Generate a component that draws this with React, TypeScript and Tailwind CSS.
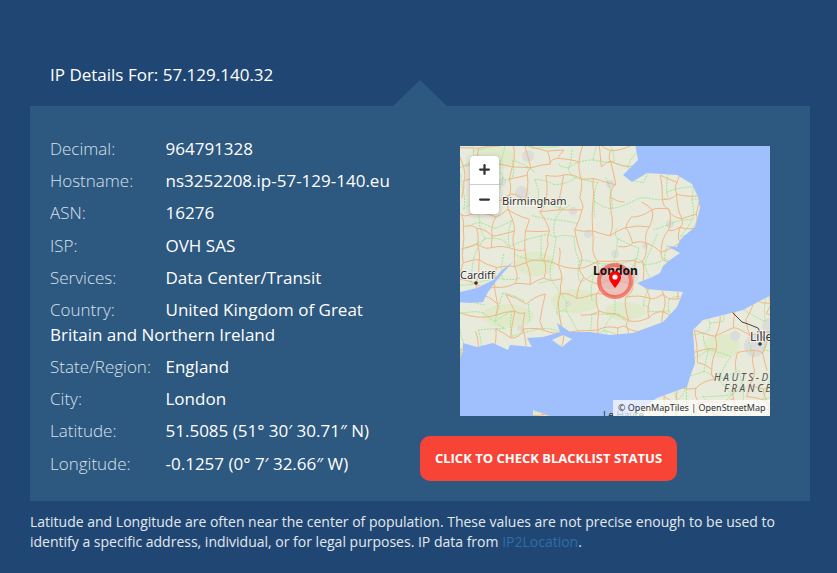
import { ReactNode } from 'react'
import { Minus, Plus } from 'lucide-react'

const britain =
  'M-5 -5 L175 -5 L176 3 L178 14 L168 24 L163 29 L172 36 L187 27 L217 29 L232 38 L238 51 L240 62 L235 81 L224 90 L220 94 L217 101 L207 100 L220 107 L210 114 L203 120 L200 127 L190 132 L177 137 L187 143 L197 144 L223 146 L217 161 L203 176 L173 187 L150 189 L130 186 L110 186 L97 177 L100 186 L83 191 L67 192 L72 201 L50 199 L48 204 L33 197 L17 201 L3 197 L3 205 L-2 217 L-5 217 L-5 156 L10 157 L23 156 L28 146 L37 134 L43 127 L53 116 L42 124 L33 134 L17 142 L0 146 L-5 146 Z'
const france =
  'M315 147 L283 164 L243 174 L233 184 L235 217 L230 231 L227 241 L197 252 L177 266 L152 275 L315 275 Z'
const wight = 'M92 194 L103 189 L112 193 L102 201 Z'
const cherbourg = 'M73 264 L90 270 L73 275 Z'

// seeded so the network comes out the same on every render
const makeLines = (seed: number, step: number, jitter: number, skip: number) => {
  let s = seed
  const rnd = () => {
    s = (s * 16807) % 2147483647
    return s / 2147483647
  }
  const cols = Math.ceil(320 / step) + 1
  const rows = Math.ceil(280 / step) + 1
  const pts: [number, number][][] = []
  for (let y = 0; y < rows; y++) {
    const row: [number, number][] = []
    for (let x = 0; x < cols; x++) {
      row.push([x * step + (rnd() - 0.5) * jitter, y * step + (rnd() - 0.5) * jitter])
    }
    pts.push(row)
  }
  const seg = (a: [number, number], b: [number, number]) => {
    const mx = (a[0] + b[0]) / 2 + (rnd() - 0.5) * step * 0.5
    const my = (a[1] + b[1]) / 2 + (rnd() - 0.5) * step * 0.5
    return `M${a[0].toFixed(1)} ${a[1].toFixed(1)}Q${mx.toFixed(1)} ${my.toFixed(1)} ${b[0].toFixed(1)} ${b[1].toFixed(1)}`
  }
  let d = ''
  for (let y = 0; y < rows; y++) {
    for (let x = 0; x < cols; x++) {
      if (x + 1 < cols && rnd() > skip) d += seg(pts[y][x], pts[y][x + 1])
      if (y + 1 < rows && rnd() > skip) d += seg(pts[y][x], pts[y + 1][x])
    }
  }
  return d
}

const roads = makeLines(4711, 17, 11, 0.26)
const greens = makeLines(90210, 19, 16, 0.4)

const urban: [number, number, number][] = [
  [30, 60, 7], [17, 32, 5], [68, 10, 6], [42, 36, 4], [62, 47, 7], [100, 55, 4], [150, 38, 4], [113, 65, 4],
  [128, 88, 4], [210, 78, 4], [225, 118, 4], [155, 108, 4], [185, 100, 3], [150, 130, 13], [170, 130, 9],
  [60, 182, 3], [108, 158, 3], [295, 200, 11], [275, 190, 5], [310, 180, 8], [285, 262, 4],
]

function MapPreview() {
  return (
    <div className="relative h-[270px] w-[310px] overflow-hidden bg-[#9fc0fc]">
      <svg width="310" height="270" viewBox="0 0 310 270" className="block font-['Noto_Sans',sans-serif]">
        <defs>
          <clipPath id="land">
            <path d={britain} />
            <path d={france} />
            <path d={wight} />
            <path d={cherbourg} />
          </clipPath>
        </defs>
        <path d={britain} fill="#e8eadc" />
        <path d={france} fill="#e8eadc" />
        <path d={wight} fill="#e8eadc" />
        <path d={cherbourg} fill="#e8eadc" />
        <g clipPath="url(#land)">
          <g fill="#e0eaca">
            <ellipse cx="35" cy="12" rx="20" ry="12" />
            <ellipse cx="75" cy="118" rx="20" ry="12" />
            <ellipse cx="48" cy="170" rx="26" ry="12" />
            <ellipse cx="115" cy="155" rx="24" ry="12" />
            <ellipse cx="165" cy="165" rx="20" ry="9" />
            <ellipse cx="262" cy="200" rx="18" ry="12" />
          </g>
          {urban.map(([cx, cy, r]) => (
            <circle key={`${cx}-${cy}`} cx={cx} cy={cy} r={r} fill="#dcdcda" />
          ))}
          <path d={greens} fill="none" stroke="#9fe694" strokeWidth="1" strokeDasharray="2 1" />
          <path d={roads} fill="none" stroke="#f0b684" strokeWidth="1" />
          <path d="M272 166 L282 176 L288 178 L298 182 L305 196" fill="none" stroke="#444" strokeWidth="1" />
        </g>
        <circle cx="30" cy="59" r="1.8" fill="#333" />
        <circle cx="16" cy="137" r="1.8" fill="#333" />
        <circle cx="300" cy="198" r="1.8" fill="#333" />
        <text x="42" y="59" fontSize="11" fill="#333" stroke="#ffffff" strokeOpacity="0.6" strokeWidth="2" paintOrder="stroke">Birmingham</text>
        <text x="0" y="133" fontSize="11" fill="#333" stroke="#ffffff" strokeOpacity="0.6" strokeWidth="2" paintOrder="stroke">Cardiff</text>
        <text x="290" y="195" fontSize="12" fill="#333" stroke="#ffffff" strokeOpacity="0.6" strokeWidth="2" paintOrder="stroke">Lille</text>
        <text x="254" y="235" fontSize="10" fontStyle="italic" letterSpacing="2.5" fill="#555">HAUTS-DE-</text>
        <text x="264" y="246" fontSize="10" fontStyle="italic" letterSpacing="2.5" fill="#555">FRANCE</text>
        <text x="143" y="273" fontSize="10" fill="#333">Le Havre</text>
        <circle cx="155" cy="135" r="16" fill="#ef9a9a" fillOpacity="0.5" stroke="#f44336" strokeOpacity="0.6" strokeWidth="4" />
        <text x="133" y="129" fontSize="12" fontWeight="700" fill="#111">London</text>
        <path d="M155 142 C151 137 149 134 149 131 A6 6 0 0 1 161 131 C161 134 159 137 155 142 Z" fill="#f00" />
        <circle cx="155" cy="131" r="2.6" fill="#fff" />
      </svg>
      <div className="absolute left-[10px] top-[10px] flex w-[29px] flex-col overflow-hidden rounded bg-white shadow-[0_1px_5px_rgba(0,0,0,0.25)]">
        <div className="flex h-[29px] items-center justify-center border-b border-[#cccccc] text-[#333333]">
          <Plus size={15} strokeWidth={3.6} />
        </div>
        <div className="flex h-[29px] items-center justify-center text-[#333333]">
          <Minus size={15} strokeWidth={3.6} />
        </div>
      </div>
      <div className="absolute bottom-0 right-0 h-4 w-[157px] bg-white/70 pl-[5px] font-['Noto_Sans',sans-serif] text-[9px] leading-4 text-[#333333]">
        © OpenMapTiles | OpenStreetMap
      </div>
    </div>
  )
}

function Row({ label, children }: { label: string; children: ReactNode }) {
  return (
    <div className="mb-2 text-[17px] leading-[24.3px]">
      <span className="inline-block w-[115.5px] font-light text-[#d8e2ec]">{label}</span>
      <span className="text-white">{children}</span>
    </div>
  )
}

export default function App() {
  return (
    <div className="h-[573px] overflow-hidden bg-[#204773] font-['Open_Sans',sans-serif] text-white">
      <div className="px-[30px] pt-[63px]">
        <h2 className="pl-5 text-[17px] font-normal leading-6">IP Details For: 57.129.140.32</h2>
        <div className="relative mt-[19px] flex h-[395px] w-[780px] bg-[#2d5880] pl-5 pt-[30.8px]">
          <div className="absolute left-[363px] top-[-26px] h-0 w-0 border-x-[27px] border-b-[26px] border-x-transparent border-b-[#2d5880]" />
          <div className="mr-[10px] w-[360px] shrink-0">
            <Row label="Decimal:">964791328</Row>
            <Row label="Hostname:">ns3252208.ip-57-129-140.eu</Row>
            <Row label="ASN:">16276</Row>
            <Row label="ISP:">OVH SAS</Row>
            <Row label="Services:">Data Center/Transit</Row>
            <Row label="Country:">United Kingdom of Great Britain and Northern Ireland</Row>
            <Row label="State/Region:">England</Row>
            <Row label="City:">London</Row>
            <Row label="Latitude:">51.5085 (51° 30′ 30.71″ N)</Row>
            <Row label="Longitude:">-0.1257 (0° 7′ 32.66″ W)</Row>
          </div>
          <div className="flex flex-col items-start pt-[9.2px]">
            <div className="ml-10">
              <MapPreview />
            </div>
            <button className="mt-5 h-[45px] w-[257px] rounded-[10px] bg-[#f84437] text-[13px] font-bold uppercase text-white">
              Click to check blacklist status
            </button>
          </div>
        </div>
        <p className="mt-[11px] text-[14px] leading-5 text-[#e3e9f0]">
          Latitude and Longitude are often near the center of population. These values are not precise enough to be used to identify a specific address, individual, or for legal purposes. IP data from{' '}
          <a className="text-[#2f6da8]">IP2Location</a>.
        </p>
      </div>
    </div>
  )
}
